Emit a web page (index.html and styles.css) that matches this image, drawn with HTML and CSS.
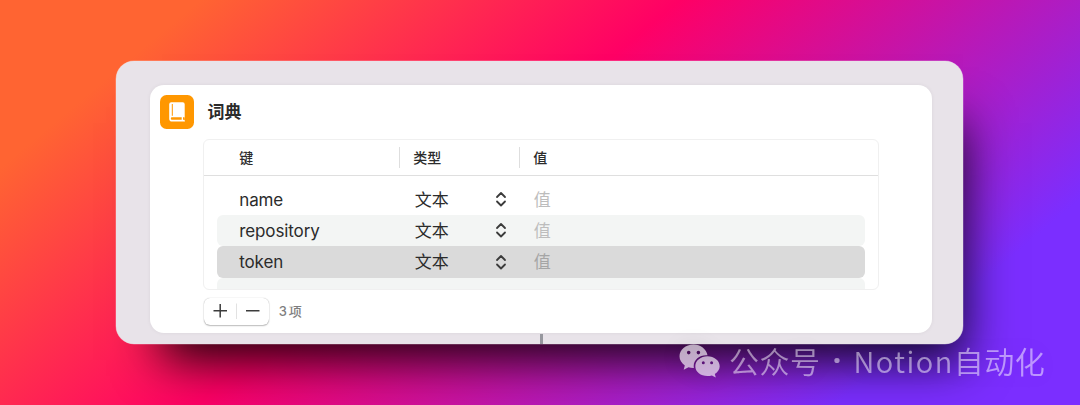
FILE: index.html
```html
<!DOCTYPE html>
<html lang="zh-CN">
<head>
<meta charset="utf-8">
<title>词典</title>
<link rel="stylesheet" href="styles.css">
</head>
<body>
<main class="panel">
  <section class="card">
    <header class="title">
      <svg class="app-icon" viewBox="0 0 34 34">
        <rect width="34" height="34" rx="6.5" fill="#ff9700"/>
        <path d="M11.3 7.2H22.7Q24.7 7.2 24.7 9.2V22.3Q24.7 23.1 24.2 23.6V25Q25 25.3 25 26.1Q25 26.6 24.3 26.6H12Q9.2 26.6 9.2 23.8V9.3Q9.2 7.2 11.3 7.2Z" fill="#fff"/>
        <path d="M12.3 9V20.8" stroke="#ff9700" stroke-width="1"/>
        <path d="M11.9 22.3H21.7V24.7H11.9Q10.8 24.7 10.8 23.5T11.9 22.3ZM23 22.3H24.6L24.1 24.7H23Z" fill="#ff9700"/>
      </svg>
      <h1>词典</h1>
    </header>
    <div class="table">
      <div class="head">
        <span>键</span><span class="split">类型</span><span class="split">值</span>
      </div>
      <div class="rows">
        <div class="row"><span class="key">name</span><span>文本</span><svg class="sort" viewBox="0 0 12 18"><path d="M2 7L6 3L10 7M2 11.5L6 15.5L10 11.5"/></svg><span class="hint">值</span></div>
        <div class="row alt"><span class="key">repository</span><span>文本</span><svg class="sort" viewBox="0 0 12 18"><path d="M2 7L6 3L10 7M2 11.5L6 15.5L10 11.5"/></svg><span class="hint">值</span></div>
        <div class="row selected"><span class="key">token</span><span>文本</span><svg class="sort" viewBox="0 0 12 18"><path d="M2 7L6 3L10 7M2 11.5L6 15.5L10 11.5"/></svg><span class="hint">值</span></div>
        <div class="row alt"></div>
      </div>
    </div>
    <footer class="tools">
      <div class="buttons">
        <svg viewBox="0 0 65 27"><path d="M9.5 12.8H23M16.2 6V19.6M42 12.8H55.5" stroke="#3c3c3c" stroke-width="1.5"/><path d="M32.5 5.5V21" stroke="#e2e2e2"/></svg>
      </div>
      <span class="count">3<b>项</b></span>
    </footer>
  </section>
  <i class="connector"></i>
</main>
<div class="watermark">
  <svg class="wechat" viewBox="0 0 42 34">
    <path fill-rule="evenodd" d="M14.5.5C6.6.5.5 5.8.5 12.3C.5 16 2.5 19.2 5.8 21.4L4.7 25.8L9.5 23.3C11.1 23.8 13 24.1 14.9 24C14.8 23.3 14.7 22.7 14.7 22C14.7 15.8 20.3 11.2 27.2 11.2L28.5 11.3C27.5 5.2 21.5.5 14.5.5ZM9.7 6.8a1.8 1.8 0 1 1 0 3.6a1.8 1.8 0 1 1 0-3.6ZM19.4 6.8a1.8 1.8 0 1 1 0 3.6a1.8 1.8 0 1 1 0-3.6Z"/>
    <path fill-rule="evenodd" d="M28.4 12.2C21.8 12.2 16.3 16.6 16.3 22.2C16.3 27.8 21.8 32 28.4 32C30 32 31.5 31.8 32.9 31.4L36.8 33.5L35.8 29.9C38.8 28.1 40.7 25.4 40.7 22.2C40.7 16.6 35.2 12.2 28.4 12.2ZM24.3 17.2a1.5 1.5 0 1 1 0 3a1.5 1.5 0 1 1 0-3ZM32.6 17.2a1.5 1.5 0 1 1 0 3a1.5 1.5 0 1 1 0-3Z"/>
  </svg>
  <span class="cn">公众号</span><span class="dot">·</span><span class="latin">Notion</span><span class="cn">自动化</span>
</div>
</body>
</html>
```
FILE: styles.css
```css
* { box-sizing: border-box; }
body {
  margin: 0;
  width: 1080px;
  height: 405px;
  overflow: hidden;
  padding: 61px 116.6px 0 116.4px;
  position: relative;
  color: #2b2b2b;
  font-family: Inter, "Noto Sans CJK SC", sans-serif;
  background: linear-gradient(140deg, #ff6432 12.8%, #ff0065 43.52%, #7b2eff 84.34%);
}
.panel {
  height: 283px;
  padding: 24.4px 31.4px 0 33.8px;
  border-radius: 18px;
  background: #e8e3e9;
  box-shadow: 0 0 0 .5px rgba(255,255,255,.35), 23px 39px 46px -23px rgba(0,0,0,.88);
}
.card {
  height: 247.3px;
  padding: 10px 53.5px 0 10px;
  border-radius: 14px;
  background: #fff;
  box-shadow: 0 0 4px rgba(0,0,0,.06);
}
.title { display: flex; align-items: center; gap: 13.3px; height: 34px; }
.app-icon { width: 34px; height: 34px; }
h1 { margin: 0; font-size: 17px; line-height: 34px; font-weight: 700; }
.table {
  height: 151px;
  margin: 10px 0 0 43px;
  border: 1px solid #f0f0f0;
  border-radius: 6px;
  overflow: hidden;
}
.head {
  display: grid;
  grid-template-columns: 160px 120px 1fr;
  align-items: center;
  height: 36px;
  padding-left: 35px;
  border-bottom: 1px solid #dfdfdf;
  font-size: 14px;
  font-weight: 500;
  line-height: 21px;
}
.split { padding-left: 13px; border-left: 1px solid #dedede; }
.rows { padding: 7px 12.5px 0 13px; }
.row {
  display: grid;
  grid-template-columns: 175.5px 80px 39px 1fr;
  align-items: center;
  height: 31.4px;
  padding-left: 22px;
  border-radius: 6px;
  font-size: 17px;
  line-height: 30px;
}
.row span { position: relative; top: .6px; }
.key { letter-spacing: -.1px; }
.alt { background: #f3f5f4; }
.selected { background: #dadada; }
.hint { color: #bdbdbd; }
.selected .hint { color: #a5a5a5; }
.sort { width: 12px; height: 18px; fill: none; stroke: #3b3b3b; stroke-width: 1.8; stroke-linecap: round; stroke-linejoin: round; }
.tools { display: flex; align-items: center; gap: 10px; margin: 7.2px 0 0 43.5px; height: 27px; }
.buttons {
  width: 65px;
  height: 27px;
  border-radius: 6px;
  box-shadow: 0 0 1px rgba(0,0,0,.3), 0 1px 1.5px rgba(0,0,0,.25);
}
.buttons svg { display: block; width: 65px; height: 27px; }
.count { display: flex; gap: 2px; color: #7e7e7e; font-size: 13px; font-weight: 500; line-height: 27px; }
.count b { font-weight: 500; }
.connector { display: block; width: 2.6px; height: 10.3px; margin: 1px 0 0 389.8px; background: #96979e; }
.watermark {
  position: absolute;
  left: 679px;
  top: 343px;
  display: flex;
  align-items: center;
  height: 36px;
  color: rgba(255,255,255,.5);
  font-family: "Noto Sans CJK SC", sans-serif;
  font-size: 30px;
  font-weight: 350;
  line-height: 36px;
  white-space: nowrap;
  filter: drop-shadow(0 0 10px rgba(0,0,0,.12));
}
.watermark span { position: relative; top: -1px; }
.wechat { width: 42px; height: 34px; fill: rgba(255,255,255,.65); margin-right: 8px; }
.cn { letter-spacing: .5px; }
.dot { width: 33px; font-family: "Noto Sans", sans-serif; font-weight: 700; text-align: center; }
.latin { font-size: 29px; letter-spacing: 1.5px; }
```
